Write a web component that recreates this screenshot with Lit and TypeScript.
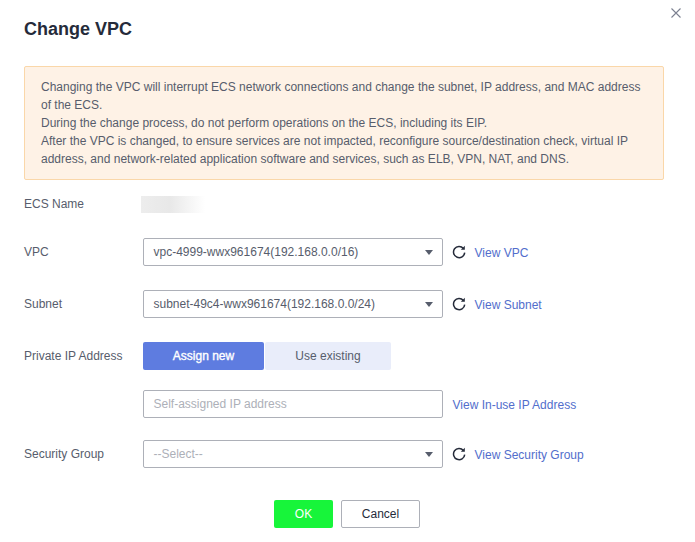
import { LitElement, html, css } from "lit";
import { customElement } from "lit/decorators.js";

const refresh = html`<svg class="refresh" viewBox="0 0 14 14" width="14" height="14" fill="none">
  <path d="M11.4 3.4A5.6 5.6 0 1 0 12.7 7.6" stroke="#252b3a" stroke-width="1.5"/>
  <path d="M12.8 0.8V4.8H8.8Z" fill="#252b3a"/>
</svg>`;

@customElement("app-root")
export class AppRoot extends LitElement {
  static styles = css`
    :host {
      display: block;
      width: 695px;
      height: 542px;
      background: #fff;
      font-family: "Liberation Sans", Arial, sans-serif;
      font-size: 12px;
      color: #575d6c;
      position: relative;
      overflow: hidden;
    }
    .dialog {
      display: flex;
      flex-direction: column;
      padding: 18px 31px 0 24px;
    }
    h1 {
      margin: 0;
      font-size: 18px;
      line-height: 22px;
      font-weight: 700;
      color: #252b3a;
    }
    .close {
      position: absolute;
      left: 670px;
      top: 7px;
    }
    .alert {
      margin-top: 26px;
      padding: 11px 16px;
      border: 1px solid #fad7a9;
      border-radius: 2px;
      background: #fef2e6;
      line-height: 18px;
      color: #575d6c;
    }
    .row {
      display: flex;
      align-items: center;
      height: 28px;
    }
    .row.name { margin-top: 10px; }
    .row.vpc { margin-top: 20px; }
    .row.gap24 { margin-top: 24px; }
    .row.gap20 { margin-top: 20px; }
    .row.gap22 { margin-top: 22px; }
    .label {
      width: 119px;
      flex: none;
    }
    .blur {
      width: 64px;
      height: 17px;
      margin-left: -2px;
      background: linear-gradient(90deg, #ededed 0%, #e8e8e8 45%, #ffffff 100%);
    }
    .field {
      box-sizing: border-box;
      width: 300px;
      height: 28px;
      flex: none;
      display: flex;
      align-items: center;
      justify-content: space-between;
      padding: 0 9px 0 9.5px;
      border: 1px solid #adb0b8;
      border-radius: 2px;
      color: #575d6c;
    }
    .placeholder { color: #adb0b8; }
    .caret {
      width: 0;
      height: 0;
      border-left: 4px solid transparent;
      border-right: 4px solid transparent;
      border-top: 5px solid #575d6c;
    }
    .refresh {
      margin-left: 9px;
      flex: none;
    }
    a {
      color: #526ecc;
      text-decoration: none;
      position: relative;
      top: 1px;
    }
    .refresh + a { margin-left: 8.5px; }
    .field + a { margin-left: 9.5px; }
    .seg {
      height: 28px;
      display: flex;
      align-items: center;
      justify-content: center;
      border-radius: 2px;
    }
    .seg.on {
      width: 121px;
      background: #5e7ce0;
      color: #fff;
      -webkit-text-stroke: 0.35px #fff;
    }
    .seg.off {
      width: 126px;
      margin-left: 1px;
      background: #e9edfa;
      color: #575d6c;
    }
    .indent { margin-left: 119px; }
    .actions {
      display: flex;
      justify-content: center;
      gap: 8px;
      margin-top: 32px;
      padding-left: 5px;
    }
    button {
      box-sizing: border-box;
      height: 28px;
      font: inherit;
      border-radius: 2px;
      padding: 0 0 0 1px;
    }
    .ok {
      width: 59px;
      border: none;
      background: #17f53a;
      color: #fff;
    }
    .cancel {
      width: 79px;
      border: 1px solid #adb0b8;
      background: #fff;
      color: #252b3a;
    }
  `;

  render() {
    return html`
      <div class="dialog">
        <h1>Change VPC</h1>
        <div class="alert">
          Changing the VPC will interrupt ECS network connections and change the subnet, IP address, and MAC address of the ECS.<br />
          During the change process, do not perform operations on the ECS, including its EIP.<br />
          After the VPC is changed, to ensure services are not impacted, reconfigure source/destination check, virtual IP address, and network-related application software and services, such as ELB, VPN, NAT, and DNS.
        </div>
        <div class="row name">
          <span class="label">ECS Name</span>
          <div class="blur"></div>
        </div>
        <div class="row vpc">
          <span class="label">VPC</span>
          <div class="field"><span>vpc-4999-wwx961674(192.168.0.0/16)</span><i class="caret"></i></div>
          ${refresh}<a>View VPC</a>
        </div>
        <div class="row gap24">
          <span class="label">Subnet</span>
          <div class="field"><span>subnet-49c4-wwx961674(192.168.0.0/24)</span><i class="caret"></i></div>
          ${refresh}<a>View Subnet</a>
        </div>
        <div class="row gap24">
          <span class="label">Private IP Address</span>
          <div class="seg on">Assign new</div>
          <div class="seg off">Use existing</div>
        </div>
        <div class="row gap20">
          <div class="field indent"><span class="placeholder">Self-assigned IP address</span></div>
          <a>View In-use IP Address</a>
        </div>
        <div class="row gap22">
          <span class="label">Security Group</span>
          <div class="field"><span class="placeholder">--Select--</span><i class="caret"></i></div>
          ${refresh}<a>View Security Group</a>
        </div>
        <div class="actions">
          <button class="ok">OK</button>
          <button class="cancel">Cancel</button>
        </div>
      </div>
      <svg class="close" width="12" height="12" viewBox="0 0 12 12" fill="none">
        <path d="M1.5 1.5L10.5 10.5M10.5 1.5L1.5 10.5" stroke="#7b8090" stroke-width="1.1"/>
      </svg>
    `;
  }
}
